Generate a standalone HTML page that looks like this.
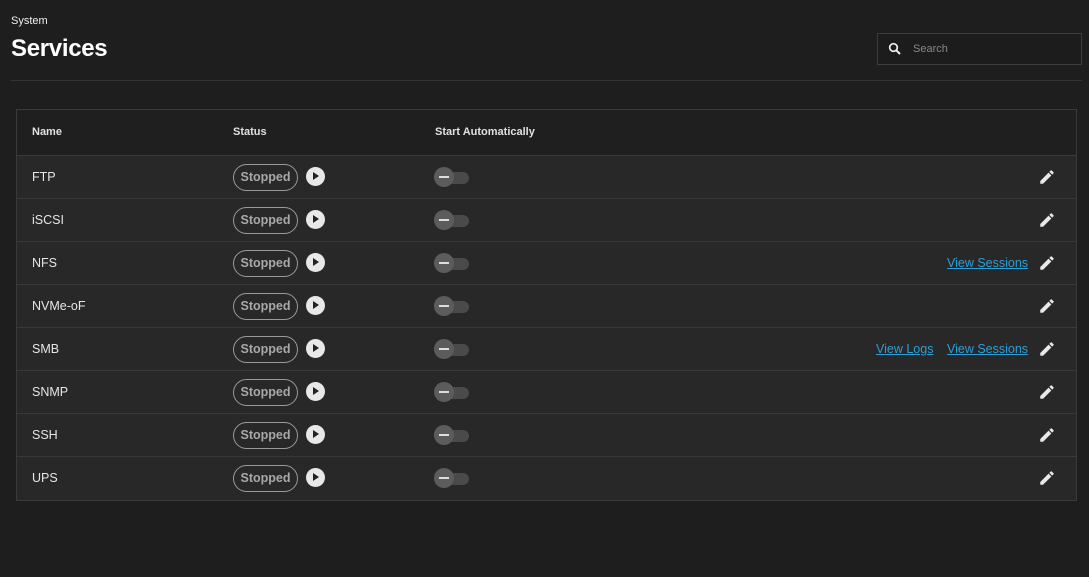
<!DOCTYPE html>
<html><head><style>
*{box-sizing:border-box;margin:0;padding:0}
body{width:1089px;height:577px;background:#1e1e1e;font-family:"Liberation Sans",sans-serif;color:#e6e6e6;position:relative;overflow:hidden}
.crumb{position:absolute;left:11px;top:15px;font-size:11px;color:#f0f0f0}
h1{position:absolute;left:11px;top:35px;font-size:24px;font-weight:bold;color:#fff;letter-spacing:-0.3px}
.search{position:absolute;left:877px;top:33px;width:205px;height:32px;border:1px solid #3c3c3c;background:#1c1c1c}
.search span{position:absolute;left:35px;top:9px;font-size:11px;color:#888}
.search svg{position:absolute;left:10px;top:8px}
.hr{position:absolute;left:11px;top:80px;width:1071px;height:1px;background:#343434}
.table{position:absolute;left:16px;top:109px;width:1061px;height:392px;border:1px solid #3a3a3a;background:#282828}
.hd{height:46px;background:#1f1f1f;border-bottom:1px solid #3a3a3a;position:relative;font-size:11px;font-weight:bold;color:#e0e0e0}
.hd div,.row div{position:absolute}
.row{height:43px;border-bottom:1px solid #383838;position:relative;font-size:12.5px}
.row:last-child{border-bottom:none}
.pill{left:216px;top:8px;width:65px;height:27px;border:1px solid #9a9a9a;border-radius:14px;color:#a8a8a8;font-size:12.5px;font-weight:bold;text-align:center;line-height:25px}
.play{left:289px;top:11px;width:19px;height:19px;border-radius:50%;background:#e8e8e8}
.play:after{content:"";position:absolute;left:7px;top:5px;border-left:6px solid #222;border-top:4.5px solid transparent;border-bottom:4.5px solid transparent}
.tr{left:426px;top:16px;width:26px;height:12px;border-radius:6px;background:#4a4a4a}
.th{left:417px;top:11px;width:20px;height:20px;border-radius:50%;background:#5c5c5c}
.th:after{content:"";position:absolute;left:5px;top:9px;width:10px;height:2px;background:#ddd}
a{color:#2b9fd6;text-decoration:underline;font-size:12.5px}
</style></head><body>
<div class="crumb">System</div>
<h1>Services</h1>
<div class="search"><svg width="14" height="14" viewBox="0 0 14 14"><circle cx="5.5" cy="5.5" r="3.8" fill="none" stroke="#eee" stroke-width="1.7"/><path d="M8.3 8.3L12 12" stroke="#eee" stroke-width="2"/></svg><span>Search</span></div>
<div class="hr"></div>
<div class="table">
<div class="hd"><div style="left:15px;top:16px">Name</div><div style="left:216px;top:16px">Status</div><div style="left:418px;top:16px">Start Automatically</div></div>
<div class="row"><div style="left:15px;top:14px">FTP</div><div class="pill">Stopped</div><div class="play"></div><div class="tr"></div><div class="th"></div><svg style="position:absolute;left:1021px;top:12px" width="18" height="18" viewBox="0 0 24 24"><path fill="#e8e8e8" d="M3 17.25V21h3.75L17.81 9.94l-3.75-3.75L3 17.25zM20.71 7.04a1 1 0 000-1.41l-2.34-2.34a1 1 0 00-1.41 0l-1.830 1.83 3.75 3.75 1.83-1.83z"/></svg></div>
<div class="row"><div style="left:15px;top:14px">iSCSI</div><div class="pill">Stopped</div><div class="play"></div><div class="tr"></div><div class="th"></div><svg style="position:absolute;left:1021px;top:12px" width="18" height="18" viewBox="0 0 24 24"><path fill="#e8e8e8" d="M3 17.25V21h3.75L17.81 9.94l-3.75-3.75L3 17.25zM20.71 7.04a1 1 0 000-1.41l-2.34-2.34a1 1 0 00-1.41 0l-1.83 1.83 3.75 3.75 1.83-1.83z"/></svg></div>
<div class="row"><div style="left:15px;top:14px">NFS</div><div class="pill">Stopped</div><div class="play"></div><div class="tr"></div><div class="th"></div><div style="left:930px;top:14px"><a>View Sessions</a></div><svg style="position:absolute;left:1021px;top:12px" width="18" height="18" viewBox="0 0 24 24"><path fill="#e8e8e8" d="M3 17.25V21h3.75L17.81 9.94l-3.75-3.75L3 17.25zM20.71 7.04a1 1 0 000-1.41l-2.34-2.34a1 1 0 00-1.41 0l-1.83 1.83 3.75 3.75 1.83-1.83z"/></svg></div>
<div class="row"><div style="left:15px;top:14px">NVMe-oF</div><div class="pill">Stopped</div><div class="play"></div><div class="tr"></div><div class="th"></div><svg style="position:absolute;left:1021px;top:12px" width="18" height="18" viewBox="0 0 24 24"><path fill="#e8e8e8" d="M3 17.25V21h3.75L17.81 9.94l-3.75-3.75L3 17.25zM20.71 7.04a1 1 0 000-1.41l-2.34-2.34a1 1 0 00-1.41 0l-1.83 1.83 3.75 3.75 1.83-1.83z"/></svg></div>
<div class="row"><div style="left:15px;top:14px">SMB</div><div class="pill">Stopped</div><div class="play"></div><div class="tr"></div><div class="th"></div><div style="left:859px;top:14px"><a>View Logs</a></div><div style="left:930px;top:14px"><a>View Sessions</a></div><svg style="position:absolute;left:1021px;top:12px" width="18" height="18" viewBox="0 0 24 24"><path fill="#e8e8e8" d="M3 17.25V21h3.75L17.81 9.94l-3.75-3.75L3 17.25zM20.71 7.04a1 1 0 000-1.41l-2.34-2.34a1 1 0 00-1.41 0l-1.83 1.83 3.75 3.75 1.83-1.83z"/></svg></div>
<div class="row"><div style="left:15px;top:14px">SNMP</div><div class="pill">Stopped</div><div class="play"></div><div class="tr"></div><div class="th"></div><svg style="position:absolute;left:1021px;top:12px" width="18" height="18" viewBox="0 0 24 24"><path fill="#e8e8e8" d="M3 17.25V21h3.75L17.81 9.94l-3.75-3.75L3 17.25zM20.71 7.04a1 1 0 000-1.41l-2.34-2.34a1 1 0 00-1.41 0l-1.83 1.83 3.75 3.75 1.83-1.83z"/></svg></div>
<div class="row"><div style="left:15px;top:14px">SSH</div><div class="pill">Stopped</div><div class="play"></div><div class="tr"></div><div class="th"></div><svg style="position:absolute;left:1021px;top:12px" width="18" height="18" viewBox="0 0 24 24"><path fill="#e8e8e8" d="M3 17.25V21h3.75L17.81 9.94l-3.75-3.75L3 17.25zM20.71 7.04a1 1 0 000-1.41l-2.34-2.34a1 1 0 00-1.41 0l-1.83 1.83 3.75 3.75 1.83-1.83z"/></svg></div>
<div class="row"><div style="left:15px;top:14px">UPS</div><div class="pill">Stopped</div><div class="play"></div><div class="tr"></div><div class="th"></div><svg style="position:absolute;left:1021px;top:12px" width="18" height="18" viewBox="0 0 24 24"><path fill="#e8e8e8" d="M3 17.25V21h3.75L17.81 9.94l-3.75-3.75L3 17.25zM20.71 7.04a1 1 0 000-1.41l-2.34-2.34a1 1 0 00-1.41 0l-1.83 1.83 3.75 3.75 1.83-1.83z"/></svg></div>
</div>
</body></html>
